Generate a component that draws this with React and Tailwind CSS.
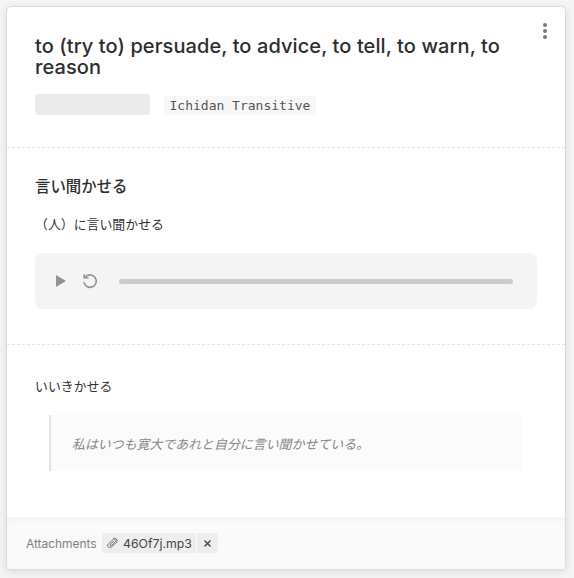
const sans = "font-['Inter','Noto_Sans_CJK_JP',sans-serif]";

function Paperclip() {
  return (
    <svg width="12" height="12" viewBox="0 0 24 24" fill="none" stroke="#707070" strokeWidth="1.9" strokeLinecap="round">
      <path d="M15.500 8.500 8 15.200c-1.700 1.700.6 3.900 2.300 2.300l8.500-7.800c3.700-3.700-1.200-7.700-4.800-4.400L4.800 13.500c-5 4.900 1.700 10.500 6.500 6.200l9.500-8.700c4.200-4.500-.5-9.700-5.300-8.500" />
    </svg>
  );
}

export default function App() {
  return (
    <div className={`h-[578px] w-full overflow-hidden bg-[#f5f5f5] px-1.5 pt-1.5 text-[#333] ${sans}`}>
      <article className="flex h-[564px] w-[560px] flex-col overflow-hidden rounded-[5px] border border-[#d6dddc] bg-white shadow-[0_2px_9px_rgba(0,0,0,0.11)]">
        <header className="flex h-[141px] shrink-0 justify-between border-b border-dashed border-[#e6e6e6] pt-[29px] pl-7">
          <div className="w-[480px]">
            <h1 className="text-[20px] leading-[21px] font-medium tracking-[0.095px] text-[#2d2d2d]">
              to (try to) persuade, to advice, to tell, to warn, to reason
            </h1>
            <div className="mt-4 flex items-end gap-3.5">
              <span className="h-[21px] w-[115px] rounded-[3px] bg-[#ebebeb]" />
              <code className="h-[19px] rounded-[3px] bg-[#f7f7f7] px-[5.500px] font-['DejaVu_Sans_Mono',monospace] text-[13px] leading-[19px] text-[#555]">
                Ichidan Transitive
              </code>
            </div>
          </div>
          <button className="-mt-[13px] mr-[18px] flex h-4 w-1 flex-col justify-between" aria-label="More">
            <span className="size-1 rounded-full bg-[#777]" />
            <span className="size-1 rounded-full bg-[#777]" />
            <span className="size-1 rounded-full bg-[#777]" />
          </button>
        </header>

        <section className="h-[197px] shrink-0 border-b border-dashed border-[#e6e6e6] px-7 pt-7">
          <h2 className="text-[15.400px] leading-[22px] font-medium text-[#2d2d2d]">言い聞かせる</h2>
          <p className="mt-[17px] text-[12.900px] leading-5">（人）に言い聞かせる</p>
          <div className="mt-[18px] flex h-14 w-[502px] items-center rounded-lg bg-[#f4f4f4] pl-[21px]">
            <svg width="10" height="12" viewBox="0 0 10 12" fill="#929292"><path d="M0 0 10 6 0 12z" /></svg>
            <svg className="ml-4" width="16" height="16" viewBox="0 0 16 16" fill="none" stroke="#929292" strokeWidth="1.600">
              <path d="M3 4.500A6.200 6.200 0 1 1 1.900 9M2.200 1.300V4.800H6.500" />
            </svg>
            <div className="mt-px ml-[21px] h-[5px] w-[394px] rounded-[2px] bg-[#cbcbcb]" />
          </div>
        </section>

        <section className="h-[172px] shrink-0 px-7 pt-8">
          <p className="text-[12.900px] leading-5">いいきかせる</p>
          <blockquote className="mt-[18px] ml-3.5 h-14 w-[474px] border-l-2 border-[#e4e4e4] bg-[#fbfbfb] pl-[21px] text-[12.930px] leading-[58px] text-[#888] italic">
            私はいつも寛大であれと自分に言い聞かせている。
          </blockquote>
        </section>

        <footer className="flex grow items-center bg-[#fafafa] pl-[19px] text-[12px] shadow-[inset_0_6px_8px_-4px_rgba(0,0,0,0.035)]">
          <span className="w-[76px] pt-0.5 tracking-[-0.05px] text-[#808080]">Attachments</span>
          <div className="flex h-5 gap-px overflow-hidden rounded-[3px] leading-5 text-[#444]">
            <span className="flex w-[94px] items-center bg-[#eee] pl-1">
              <Paperclip />
              <span className="ml-[5px] pt-px text-[12.300px]">46Of7j.mp3</span>
            </span>
            <button className="flex w-[21px] items-center justify-center bg-[#eee]" aria-label="Remove">
              <svg width="7" height="7" viewBox="0 0 7 7" stroke="#444" strokeWidth="1.400"><path d="m.5.5 6 6m0-6-6 6" /></svg>
            </button>
          </div>
        </footer>
      </article>
    </div>
  );
}
